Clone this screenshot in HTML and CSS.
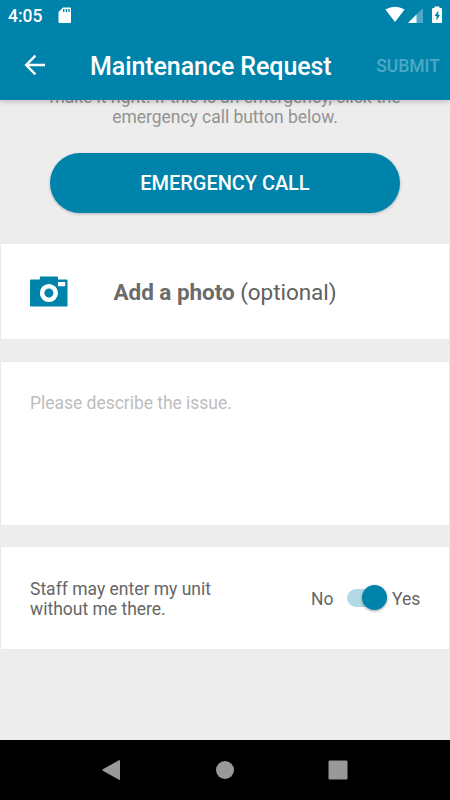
FILE: index.html
```html
<!DOCTYPE html>
<html lang="en">
<head>
<meta charset="utf-8">
<title>Maintenance Request</title>
<link rel="stylesheet" href="styles.css">
</head>
<body>
<div class="screen">
  <header class="top">
    <div class="status">
      <span class="clock">4:05</span>
      <svg class="sd" width="14" height="17" viewBox="0 0 14 17"><path fill="#fff" fill-rule="evenodd" d="M5 0.5H12Q13 .5 13 1.5V15Q13 16 12 16H1.5Q.5 16 .5 15V5ZM5 2V5H6.4V2ZM7.7 2V5H9.1V2ZM10.3 2V5H11.7V2Z"/></svg>
      <svg class="indicators" width="58" height="18" viewBox="0 0 58 18">
        <path fill="#fff" d="M.4 3.6Q10 -2 19.600 3.6L10 16Z"/>
        <path fill="#4da9c5" d="M38 2V17H23Z"/>
        <path fill="#fff" d="M31.5 8.5V17H23Z"/>
        <path fill="#fff" fill-rule="evenodd" d="M49.500 .5H54.500V2H56Q57 2 57 3V16Q57 17 56 17H48Q47 17 47 16V3Q47 2 48 2H49.500ZM53.300 4.500L49.500 10H51.500V14.500L55 9H53.300Z"/>
      </svg>
    </div>
    <div class="appbar">
      <svg class="back" width="22" height="22" viewBox="0 0 22 22"><path fill="none" stroke="#fff" stroke-width="2.4" d="M11.400 1.700L2.200 11L11.400 20.300M2.200 11H21"/></svg>
      <h1 class="title">Maintenance Request</h1>
      <span class="submit">SUBMIT</span>
    </div>
  </header>
  <main class="content">
    <p class="intro">make it right. If this is an emergency, click the<br>emergency call button below.</p>
    <button class="call">EMERGENCY CALL</button>
    <section class="card photo">
      <svg width="38" height="31" viewBox="0 0 38 31"><path fill="#0083ab" fill-rule="evenodd" d="M1 3.500H9.800V1.500Q9.800 .5 10.800 .5H27Q28 .5 28 1.500V3.500H36.700Q37.500 3.500 37.500 4.500V29.500Q37.500 30.500 36.500 30.500H1Q0 30.500 0 29.500V4.500Q0 3.500 1 3.500ZM28 6V10.300H35.200V6Z"/><circle cx="18.900" cy="17" r="6.800" fill="none" stroke="#fff" stroke-width="4.600"/></svg>
      <span class="photo-label"><b>Add a photo</b> (optional)</span>
    </section>
    <section class="card issue">Please describe the issue.</section>
    <section class="card entry">
      <p class="entry-text">Staff may enter my unit<br>without me there.</p>
      <span class="no">No</span>
      <span class="switch"><span class="thumb"></span></span>
      <span class="yes">Yes</span>
    </section>
  </main>
  <nav class="nav">
    <svg width="20" height="22" viewBox="0 0 20 22"><path fill="#999" d="M19 1.500V20.500Q19 21.200 18 20.800L1.800 11.700Q.8 11 1.800 10.300L18 1.200Q19 .8 19 1.500Z"/></svg>
    <svg width="20" height="20" viewBox="0 0 20 20"><circle cx="10" cy="10" r="9" fill="#999"/></svg>
    <svg width="20" height="20" viewBox="0 0 20 20"><rect x=".5" y=".5" width="19" height="19" rx="1.200" fill="#999"/></svg>
  </nav>
</div>
</body>
</html>
```
FILE: styles.css
```css
* { box-sizing: border-box; }
body { margin: 0; font-family: Roboto, sans-serif; }
h1, p { margin: 0; }
svg { display: block; flex: none; }
.screen { width: 450px; height: 800px; display: flex; flex-direction: column; background: #ededed; overflow: hidden; }
.top { height: 100px; flex: none; background: #0083ab; color: #fff; box-shadow: 0 1px 6px rgba(0,0,0,.25); z-index: 1; }
.status { height: 30px; display: flex; align-items: flex-start; padding: 6px 7px 0 8px; }
.clock { font-size: 17.5px; line-height: 20px; font-weight: 500; width: 50px; }
.sd { margin-top: 1px; }
.indicators { margin-left: auto; }
.appbar { height: 70px; display: flex; align-items: center; padding: 0 10px 0 24px; }
.back { width: 22px; }
.title { margin-left: 44px; font-size: 25px; letter-spacing: -.08px; line-height: 30px; font-weight: 500; white-space: nowrap; padding-top: 3px; }
.submit { margin-left: auto; font-size: 17.5px; font-weight: 500; color: #4da9c5; padding-top: 1px; }
.content { flex: 1; min-height: 0; display: flex; flex-direction: column; padding: 0 1px; }
.intro { margin-top: -13px; height: 66px; text-align: center; font-size: 17.5px; letter-spacing: -.03px; line-height: 20px; color: #939393; }
.call { flex: none; align-self: center; width: 350px; height: 60px; border: 0; border-radius: 30px; background: #0083ab; color: #fff; font: 500 20px Roboto, sans-serif; letter-spacing: -.05px; box-shadow: 0 1px 3px rgba(0,0,0,.25); margin-bottom: 31px; padding: 0; }
.card { flex: none; background: #fff; box-shadow: 0 0 1px #ddd; }
.photo { height: 95px; display: flex; align-items: center; padding-left: 29px; }
.photo-label { margin-left: 45.5px; font-size: 22.5px; letter-spacing: -.05px; color: #606060; padding-top: 1px; }
.photo-label b { font-weight: 700; color: #6b6b6b; }
.issue { height: 163px; margin-top: 23px; padding: 31px 29px; font-size: 17.5px; letter-spacing: -.03px; line-height: 21px; color: #bdbdbd; }
.entry { height: 102px; margin-top: 22px; padding-left: 29px; display: flex; align-items: center; font-size: 17.5px; color: #666; }
.entry-text { width: 281px; line-height: 20.5px; padding-top: 2px; }
.no { width: 36px; padding-top: 1px; }
.switch { width: 39px; height: 18px; border-radius: 9px; background: #b2dae6; position: relative; }
.thumb { position: absolute; right: -1px; top: -4px; width: 25px; height: 25px; border-radius: 50%; background: #0083ab; box-shadow: 0 1px 3px rgba(0,0,0,.4); }
.yes { margin-left: 6px; padding-top: 1px; }
.nav { height: 60px; flex: none; background: #000; display: grid; grid-template-columns: 123px 112px 20px; align-items: center; padding-left: 101px; }
.nav svg:nth-child(2) { margin-left: -9px; }
.nav svg:nth-child(3) { margin-left: -8.5px; }
```
